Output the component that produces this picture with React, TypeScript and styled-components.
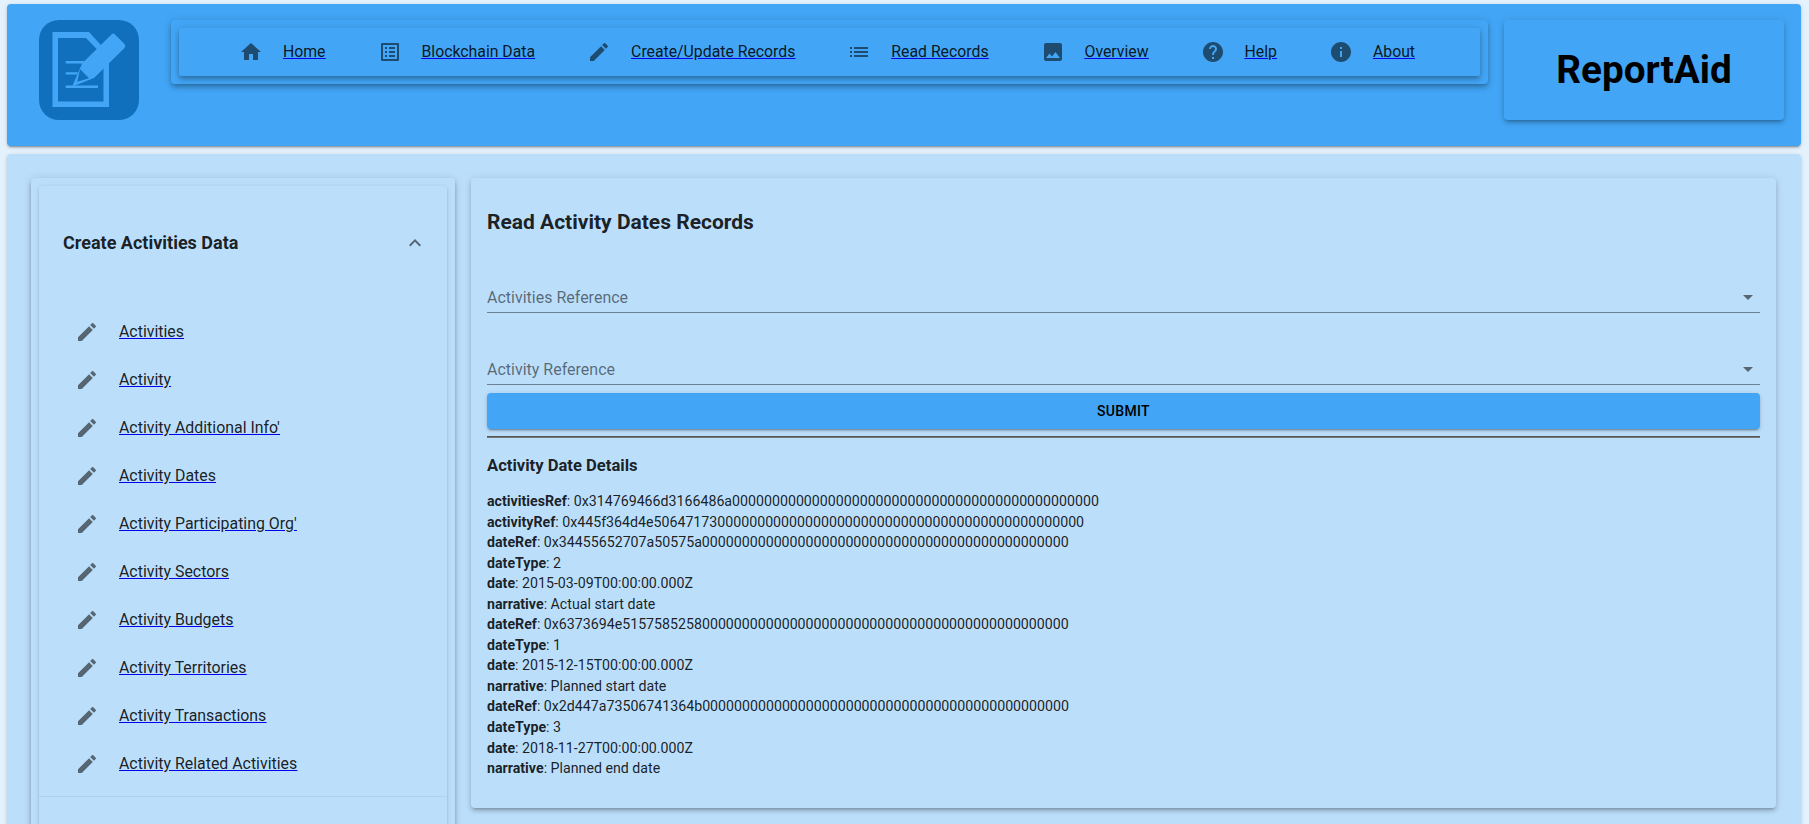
import styled, { createGlobalStyle } from "styled-components"
import { MdEdit, MdExpandLess, MdHelp, MdHome, MdImage, MdInfo, MdList, MdListAlt } from "react-icons/md"
import { ComponentType } from "react"

const GlobalStyle = createGlobalStyle`
  html, body {
    height: 100%;
    overflow: hidden;
  }
  body {
    margin: 0;
    background: #e3f2fd;
    font-family: Roboto, "Liberation Sans", sans-serif;
    color: rgba(0, 0, 0, 0.87);
  }
`

const lowShadow = "0 3px 1px -2px rgba(0,0,0,.2), 0 2px 2px 0 rgba(0,0,0,.14), 0 1px 5px 0 rgba(0,0,0,.12)"
const cardShadow = "0 3px 3px -2px rgba(0,0,0,.2), 0 3px 4px 0 rgba(0,0,0,.14), 0 1px 8px 0 rgba(0,0,0,.12)"
const midShadow = "0 2px 4px -1px rgba(0,0,0,.2), 0 4px 5px 0 rgba(0,0,0,.14), 0 1px 10px 0 rgba(0,0,0,.12)"

const navItems: { label: string; icon: ComponentType }[] = [
  { label: "Home", icon: MdHome },
  { label: "Blockchain Data", icon: MdListAlt },
  { label: "Create/Update Records", icon: MdEdit },
  { label: "Read Records", icon: MdList },
  { label: "Overview", icon: MdImage },
  { label: "Help", icon: MdHelp },
  { label: "About", icon: MdInfo },
]

const createLinks = [
  "Activities",
  "Activity",
  "Activity Additional Info'",
  "Activity Dates",
  "Activity Participating Org'",
  "Activity Sectors",
  "Activity Budgets",
  "Activity Territories",
  "Activity Transactions",
  "Activity Related Activities",
]

// bytes32 values, padded with zeros to 66 characters
const pad = (hex: string) => hex.padEnd(66, "0")

const details: [string, string][] = [
  ["activitiesRef", pad("0x314769466d3166486a")],
  ["activityRef", pad("0x445f364d4e50647173")],
  ["dateRef", pad("0x34455652707a50575a")],
  ["dateType", "2"],
  ["date", "2015-03-09T00:00:00.000Z"],
  ["narrative", "Actual start date"],
  ["dateRef", pad("0x6373694e5157585258")],
  ["dateType", "1"],
  ["date", "2015-12-15T00:00:00.000Z"],
  ["narrative", "Planned start date"],
  ["dateRef", pad("0x2d447a73506741364b")],
  ["dateType", "3"],
  ["date", "2018-11-27T00:00:00.000Z"],
  ["narrative", "Planned end date"],
]

function Logo() {
  return (
    <LogoBox>
      <svg width="100" height="100" viewBox="0 0 100 100">
        <rect width="100" height="100" rx="20" fill="#1170bd" />
        <path d="M13.5 12H50L70 34V87H13.5z M19 18V81.5H64.5V36L47 18z" fill="#42a5f5" fillRule="evenodd" />
        <path d="M50.7 21.7L57 31 50.7 32.7z" fill="#1170bd" />
        <path d="M26.7 41h19v2.4h-19zM26.7 52.2h12v2.4h-12zM26.7 65.5h32.3v2.4H26.7z" fill="#42a5f5" />
        <path d="M73 14Q74.500 13 76 14.500L85.500 24Q87 26 85.500 28L55 58 33 66.700 43.300 43.300z" fill="#42a5f5" />
        <path d="M41 49L38.300 61.700 50 58.300z" fill="#1170bd" />
      </svg>
    </LogoBox>
  )
}

export default function App() {
  return (
    <>
      <GlobalStyle />
      <Page>
        <Header>
          <Logo />
          <NavShell>
            <NavBar>
              {navItems.map(({ label, icon: Icon }) => (
                <NavItem key={label} href="#">
                  <NavIcon><Icon /></NavIcon>
                  <NavLabel>{label}</NavLabel>
                </NavItem>
              ))}
            </NavBar>
          </NavShell>
          <Brand>ReportAid</Brand>
        </Header>

        <Main>
          <SideShell>
            <SideCard>
              <AccordionHead>
                <span>Create Activities Data</span>
                <MdExpandLess />
              </AccordionHead>
              <LinkList>
                {createLinks.map(label => (
                  <LinkRow key={label} href="#">
                    <MdEdit />
                    <LinkLabel>{label}</LinkLabel>
                  </LinkRow>
                ))}
              </LinkList>
              <NextSection />
            </SideCard>
          </SideShell>

          <Content>
            <Title>Read Activity Dates Records</Title>
            <SelectField>
              <span>Activities Reference</span>
              <Arrow />
            </SelectField>
            <SelectField>
              <span>Activity Reference</span>
              <Arrow />
            </SelectField>
            <Submit type="button">Submit</Submit>
            <Rule />
            <DetailsTitle>Activity Date Details</DetailsTitle>
            <Details>
              {details.map(([key, value], i) => (
                <div key={i}>
                  <b>{key}</b>: {value}
                </div>
              ))}
            </Details>
          </Content>
        </Main>
      </Page>
    </>
  )
}

function Arrow() {
  return (
    <svg width="24" height="24" viewBox="0 0 24 24" fill="rgba(0,0,0,.54)">
      <path d="M7 10l5 5 5-5z" />
    </svg>
  )
}

const Page = styled.div`
  display: flex;
  flex-direction: column;
  gap: 8px;
  padding: 4px 8px 0 7px;
`

const Header = styled.header`
  display: flex;
  align-items: flex-start;
  padding: 16px 17px 26px 32px;
  background: #42a5f5;
  border-radius: 4px;
  box-shadow: ${lowShadow};
`

const LogoBox = styled.div`
  flex: none;
  width: 100px;
  height: 100px;
  margin-right: 32px;

  svg {
    display: block;
  }
`

const NavShell = styled.nav`
  flex: 1;
  padding: 8px;
  margin-right: 16px;
  border-radius: 4px;
  box-shadow: ${midShadow};
`

const NavBar = styled.div`
  display: flex;
  justify-content: center;
  align-items: center;
  gap: 52px;
  height: 48px;
  padding-right: 5px;
  border-radius: 2px;
  box-shadow: ${midShadow};
`

const NavItem = styled.a`
  display: flex;
  align-items: center;
  color: #0000ee;
`

const NavIcon = styled.span`
  display: flex;
  width: 44px;
  font-size: 24px;
  color: rgba(0, 0, 0, 0.54);
`

const LinkLabel = styled.span`
  font-size: 15.9px;
  line-height: 24px;
  color: rgba(0, 0, 0, 0.87);
  text-decoration: underline;
  text-decoration-color: #0000ee;
`

const NavLabel = styled(LinkLabel)`
  font-size: 15.8px;
`

const Brand = styled.div`
  flex: none;
  display: flex;
  align-items: center;
  justify-content: center;
  width: 280px;
  height: 98px;
  padding-bottom: 2px;
  font-size: 38.7px;
  font-weight: 700;
  color: #000;
  border-radius: 4px;
  box-shadow: ${cardShadow};
`

const Main = styled.main`
  display: flex;
  align-items: flex-start;
  gap: 16px;
  padding: 24px 25px 24px 24px;
  background: #bbdefb;
  border-radius: 4px;
  box-shadow: ${lowShadow};
`

const SideShell = styled.aside`
  flex: none;
  width: 424px;
  padding: 8px;
  box-sizing: border-box;
  border-radius: 4px;
  box-shadow: ${midShadow};
`

const SideCard = styled.div`
  border-radius: 4px;
  box-shadow: ${lowShadow};
`

const AccordionHead = styled.div`
  display: flex;
  align-items: center;
  justify-content: space-between;
  height: 113px;
  padding: 0 20px 1px 24px;
  font-size: 18px;
  font-weight: 700;

  svg {
    font-size: 24px;
    color: rgba(0, 0, 0, 0.54);
  }
`

const LinkList = styled.div`
  padding: 8px 0;
  border-bottom: 1px solid rgba(0, 0, 0, 0.06);
`

const LinkRow = styled.a`
  display: flex;
  align-items: center;
  height: 48px;
  padding-left: 36px;
  color: #0000ee;

  svg {
    flex: none;
    width: 24px;
    height: 24px;
    margin-right: 20px;
    color: rgba(0, 0, 0, 0.54);
  }
`

const NextSection = styled.div`
  height: 90px;
`

const Content = styled.section`
  flex: 1;
  height: 630px;
  box-sizing: border-box;
  padding: 32px 16px 0;
  background: #bbdefb;
  border-radius: 4px;
  box-shadow: ${cardShadow};
`

const Title = styled.h2`
  margin: 0 0 46px;
  font-size: 21px;
  line-height: 24px;
  font-weight: 700;
`

const SelectField = styled.div`
  display: flex;
  align-items: center;
  justify-content: space-between;
  height: 30px;
  padding-top: 2px;
  margin-top: 39px;
  font-size: 16px;
  color: rgba(0, 0, 0, 0.54);
  border-bottom: 1px solid rgba(0, 0, 0, 0.42);

  &:first-of-type {
    margin-top: 0;
  }
`

const Submit = styled.button`
  display: block;
  width: 100%;
  height: 36px;
  margin-top: 8px;
  padding: 0;
  border: 0;
  border-radius: 4px;
  background: #42a5f5;
  color: #000;
  font: 500 14px Roboto, sans-serif;
  letter-spacing: 0.3px;
  text-transform: uppercase;
  box-shadow: ${lowShadow};
`

const Rule = styled.hr`
  margin: 7px 0 0;
  border: 0;
  border-top: 1px solid #555;
  border-bottom: 1px solid #777;
`

const DetailsTitle = styled.h3`
  margin: 16px 0 0;
  font-size: 16.6px;
  line-height: 24px;
  font-weight: 700;
`

const Details = styled.div`
  margin-top: 13px;
  font-size: 14.2px;
  line-height: 20.55px;

  b {
    font-weight: 700;
  }
`
